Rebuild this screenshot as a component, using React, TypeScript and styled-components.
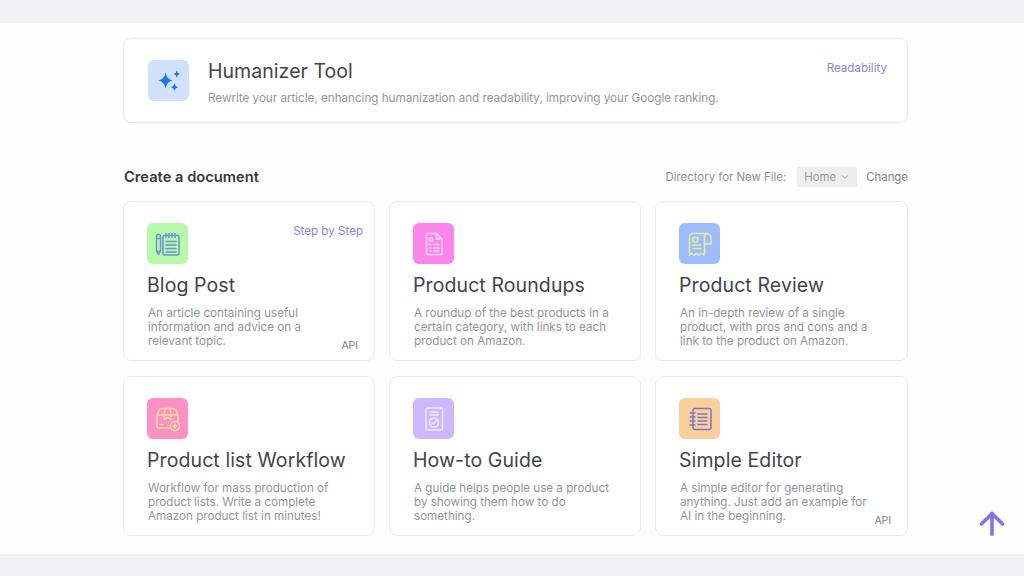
import styled, { createGlobalStyle } from "styled-components"
import { ArrowUp, ChevronDown } from "lucide-react"
import type { ReactNode } from "react"

const GlobalStyle = createGlobalStyle`
    html, body {
        margin: 0;
        padding: 0;
        background: #f1f0f6;
    }
    body {
        font-family: Inter, "Liberation Sans", sans-serif;
        overflow: hidden;
    }
`

const Page = styled.div`
    height: 576px;
    padding: 23px 0 22px;
    box-sizing: border-box;
`
const Main = styled.main`
    height: 531px;
    background: #fefefe;
    padding: 15px 116px 0 123px;
    box-sizing: border-box;
`
const Card = styled.div`
    position: relative;
    background: #fff;
    border: 1px solid #e9e8f0;
    border-radius: 8px;
    box-sizing: border-box;
`
const HeroCard = styled(Card)`
    height: 85px;
    display: flex;
    align-items: center;
    gap: 19px;
    padding: 0 20px 0 24px;
`
const IconBox = styled.div<{ $bg: string }>`
    width: 41px;
    height: 41px;
    flex: none;
    border-radius: 6px;
    background: ${p => p.$bg};
    display: flex;
    align-items: center;
    justify-content: center;
`
const HeroText = styled.div`
    display: flex;
    flex-direction: column;
    gap: 8px;
    margin-top: 2px;
`
const HeroTitle = styled.div`
    font-size: 19.5px;
    line-height: 24px;
    color: #44444c;
    letter-spacing: 0.05px;
`
const Desc = styled.div`
    font-size: 11.65px;
    line-height: 14px;
    color: #94949c;
`
const Tag = styled.span<{ $right: number }>`
    position: absolute;
    top: 22px;
    right: ${p => p.$right}px;
    font-size: 11.6px;
    line-height: 14px;
    color: #8f83d4;
`
const SectionHead = styled.div`
    display: flex;
    align-items: center;
    justify-content: space-between;
    margin: 43px 0 0 1px;
    height: 22px;
`
const SectionTitle = styled.h2`
    margin: 0;
    font-size: 14.7px;
    font-weight: 600;
    color: #38383e;
`
const DirRow = styled.div`
    display: flex;
    align-items: center;
    font-size: 11.4px;
    color: #8f8f97;
`
const Select = styled.div`
    display: flex;
    align-items: center;
    justify-content: space-between;
    width: 60px;
    height: 20px;
    padding: 0 7px;
    margin: 0 9px 0 11px;
    box-sizing: border-box;
    background: #ededf0;
    border-radius: 2px;
    color: #9a9aa2;
`
const Change = styled.span`
    color: #808086;
`
const Grid = styled.div`
    display: grid;
    grid-template-columns: 252px 252px 253px;
    grid-auto-rows: 160px;
    gap: 15px 14px;
    margin-top: 13px;
`
const DocCard = styled(Card)`
    padding: 21px 23px 0;
`
const DocTitle = styled.div`
    margin-top: 9px;
    font-size: 19.5px;
    line-height: 24px;
    color: #44444c;
    letter-spacing: 0.1px;
`
const DocDesc = styled(Desc)`
    margin-top: 9px;
    margin-left: 1px;
`
const ApiTag = styled.span`
    position: absolute;
    right: 16px;
    bottom: 8px;
    font-size: 10.4px;
    line-height: 12px;
    color: #7d7d85;
`
const ScrollTop = styled.div`
    position: fixed;
    left: 974px;
    top: 506px;
    width: 36px;
    height: 36px;
    color: #8573e2;
`

const Sparkles = () => (
    <svg width="26" height="26" viewBox="0 0 26 26" fill="#1f7ae0">
        <path d="M9.5 4.700 Q10.800 11.200 16.500 12.500 Q10.800 13.800 9.500 20.300 Q8.200 13.800 2.500 12.500 Q8.200 11.200 9.500 4.700Z" />
        <path d="M20.800 2.400 Q21.400 5.400 24 6 Q21.400 6.600 20.800 9.600 Q20.200 6.600 17.600 6 Q20.200 5.400 20.800 2.400Z" />
        <path d="M18.500 15.600 Q19.100 18.700 22 19.300 Q19.100 19.900 18.500 23 Q17.900 19.900 15 19.300 Q17.900 18.700 18.500 15.600Z" />
    </svg>
)

const Line = (props: { children: ReactNode; color: string }) => (
    <svg width="26" height="26" viewBox="0 0 26 26" fill="none" stroke={props.color} strokeWidth="1.5" strokeLinecap="round" strokeLinejoin="round">
        {props.children}
    </svg>
)

const NotebookIcon = () => (
    <Line color="#6a93d9">
        <rect x="1.500" y="3.500" width="4" height="17" rx="2" />
        <path d="M1.500 7.500h4M1.500 20l2 3.500 2-3.500" />
        <rect x="8" y="4.500" width="16" height="19.500" rx="1.500" />
        <path d="M11 2.500v4M14 2.500v4M17 2.500v4M20 2.500v4M11 10.500h10M11 14h10M11 17.500h10M11 21h10" />
    </Line>
)
const DocIcon = () => (
    <Line color="#fbd6f4">
        <path d="M5.500 2.500h10l5.500 5.500v15.500H5.500z" />
        <path d="M15.500 2.500v5.500h5.500" />
        <rect x="8.500" y="7" width="3" height="3" />
        <path d="M8.500 13.500h1.500M12.500 13.500h5.500M8.500 17h1.500M12.500 17h5.500M8.500 20h1.500M12.500 20h5.500" />
    </Line>
)
const ReceiptIcon = () => (
    <Line color="#e8eaa0">
        <path d="M2.500 24V5a2.500 2.500 0 0 1 2.500-2.500h14.500a4.500 4.500 0 0 1 4.500 4.500v6h-6.500" />
        <path d="M17.500 20V6.500a4 4 0 0 1 2-4" />
        <path d="M2.500 24l2-1.500 2.500 1.500 2.500-1.500 2.500 1.500 2.500-1.500 3 1.500v-4" />
        <rect x="6" y="6.500" width="4.500" height="4.500" />
        <path d="M6 14h8M6 17.500h8" />
    </Line>
)
const BoxIcon = () => (
    <Line color="#fbdc9c">
        <path d="M2 9l2-4.500Q5 2.500 7 2.500h11q2 0 3 2l2 4.500v7M2 9v11q0 2 2 2h11M2 9h21" />
        <path d="M10 2.500l-1 6.500v4.500l3.500-2 3.500 2V9l-1-6.500" />
        <path d="M5 18.500h3" />
        <circle cx="20" cy="20" r="4.500" />
        <path d="M18 20h4M20 18v4" />
    </Line>
)
const GuideIcon = () => (
    <Line color="#efe6ff">
        <rect x="5" y="2" width="16.500" height="22" rx="2" />
        <path d="M9 6h8.500M9 9h8.500" />
        <circle cx="13" cy="16.500" r="4.500" />
        <path d="M11 16.500l1.500 1.500 4-4.500" />
    </Line>
)
const SpiralIcon = () => (
    <Line color="#7f78c8">
        <rect x="6" y="2.500" width="18" height="21" rx="2" />
        <path d="M3 7h5M3 11h5M3 15h5M3 19h5M11 8h9M11 11.500h9M11 15h9M11 18.500h9" />
    </Line>
)

type Doc = {
    title: string
    desc: string[]
    bg: string
    icon: ReactNode
    tag?: string
    api?: boolean
}

const docs: Doc[] = [
    {
        title: "Blog Post",
        desc: ["An article containing useful", "information and advice on a", "relevant topic."],
        bg: "#b6f9a8",
        icon: <NotebookIcon />,
        tag: "Step by Step",
        api: true,
    },
    {
        title: "Product Roundups",
        desc: ["A roundup of the best products in a", "certain category, with links to each", "product on Amazon."],
        bg: "#fc85ec",
        icon: <DocIcon />,
    },
    {
        title: "Product Review",
        desc: ["An in-depth review of a single", "product, with pros and cons and a", "link to the product on Amazon."],
        bg: "#9dbcfb",
        icon: <ReceiptIcon />,
    },
    {
        title: "Product list Workflow",
        desc: ["Workflow for mass production of", "product lists. Write a complete", "Amazon product list in minutes!"],
        bg: "#fd90c4",
        icon: <BoxIcon />,
    },
    {
        title: "How-to Guide",
        desc: ["A guide helps people use a product", "by showing them how to do", "something."],
        bg: "#ccb8fc",
        icon: <GuideIcon />,
    },
    {
        title: "Simple Editor",
        desc: ["A simple editor for generating", "anything. Just add an example for", "AI in the beginning."],
        bg: "#fbcf9c",
        icon: <SpiralIcon />,
        api: true,
    },
]

function App() {
    return (
        <Page>
            <GlobalStyle />
            <Main>
                <HeroCard>
                    <IconBox $bg="#cfe1fb">
                        <Sparkles />
                    </IconBox>
                    <HeroText>
                        <HeroTitle>Humanizer Tool</HeroTitle>
                        <Desc>Rewrite your article, enhancing humanization and readability, improving your Google ranking.</Desc>
                    </HeroText>
                    <Tag $right={20}>Readability</Tag>
                </HeroCard>
                <SectionHead>
                    <SectionTitle>Create a document</SectionTitle>
                    <DirRow>
                        Directory for New File:
                        <Select>
                            Home
                            <ChevronDown size={10} />
                        </Select>
                        <Change>Change</Change>
                    </DirRow>
                </SectionHead>
                <Grid>
                    {docs.map(doc => (
                        <DocCard key={doc.title}>
                            <IconBox $bg={doc.bg}>{doc.icon}</IconBox>
                            <DocTitle>{doc.title}</DocTitle>
                            <DocDesc>
                                {doc.desc.map(line => (
                                    <div key={line}>{line}</div>
                                ))}
                            </DocDesc>
                            {doc.tag && <Tag $right={11}>{doc.tag}</Tag>}
                            {doc.api && <ApiTag>API</ApiTag>}
                        </DocCard>
                    ))}
                </Grid>
            </Main>
            <ScrollTop>
                <ArrowUp size={36} strokeWidth={2.4} />
            </ScrollTop>
        </Page>
    )
}

export default App
